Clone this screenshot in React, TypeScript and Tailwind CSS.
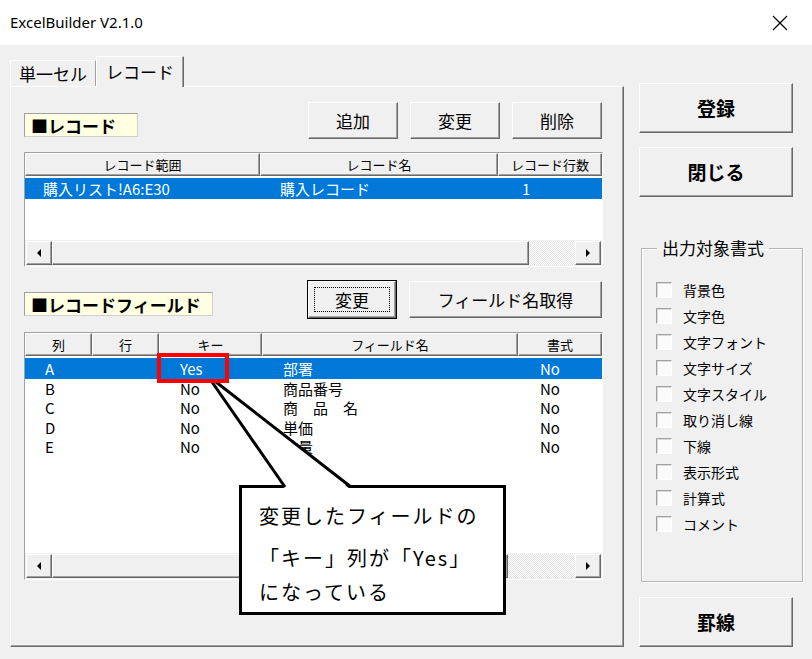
import React from "react";

type Col = { label: string; w: string; pad: string };

const raised =
  "bg-[#f0f0f0] border border-t-white border-l-white border-r-[#696969] border-b-[#696969] shadow-[inset_-1px_-1px_0_#a0a0a0]";

const Arrow = ({ dir }: { dir: "l" | "r" }) => (
  <svg width="8" height="10" viewBox="0 0 8 10">
    {dir === "l" ? (
      <polygon points="6,1 2,5 6,9" fill="#000" />
    ) : (
      <polygon points="2,1 6,5 2,9" fill="#000" />
    )}
  </svg>
);

const HScroll = ({ thumb }: { thumb: string }) => (
  <div className="h-[26px] shrink-0 flex bg-[#f0f0f0] p-[1px]">
    <div className={`w-[26px] h-full flex items-center justify-center ${raised}`}>
      <Arrow dir="l" />
    </div>
    <div className={`${thumb} h-full ${raised}`} />
    <div className="flex-1 h-full bg-[repeating-conic-gradient(#ffffff_0%_25%,#e3e3e3_0%_50%)] bg-[length:2px_2px]" />
    <div className={`w-[26px] h-full flex items-center justify-center ${raised}`}>
      <Arrow dir="r" />
    </div>
  </div>
);

const ListView = ({
  cols,
  rows,
  h,
  thumb,
}: {
  cols: Col[];
  rows: string[][];
  h: string;
  thumb: string;
}) => (
  <div
    className={`${h} w-[579px] flex flex-col bg-white border border-t-[#a0a0a0] border-l-[#a0a0a0] border-r-white border-b-white`}
  >
    <div className="h-[23px] flex shrink-0">
      {cols.map((c, i) => (
        <div
          key={i}
          className={`${c.w} h-full flex items-center justify-center text-[13px] ${raised}`}
        >
          {c.label}
        </div>
      ))}
    </div>
    <div className="flex-1 pt-[2px] overflow-hidden">
      {rows.map((r, ri) => (
        <div
          key={ri}
          className={`flex items-center text-[15px] leading-[17px] overflow-hidden ${
            ri === 0 ? "h-[21px] bg-[#0078d7] text-white" : "h-[19.3px] text-black"
          }`}
        >
          {r.map((cell, ci) => (
            <div key={ci} className={`${cols[ci].w} ${cols[ci].pad} whitespace-pre`}>
              {cell}
            </div>
          ))}
        </div>
      ))}
    </div>
    <HScroll thumb={thumb} />
  </div>
);

const Btn = ({
  className,
  children,
}: {
  className: string;
  children: React.ReactNode;
}) => (
  <div className={`flex items-center justify-center ${raised} ${className}`}>
    {children}
  </div>
);

const Label = ({ w, children }: { w: string; children: React.ReactNode }) => (
  <div
    className={`${w} h-[24px] bg-[#ffffe1] border border-t-[#a0a0a0] border-l-[#a0a0a0] border-r-[#d0d0d0] border-b-[#d0d0d0] flex items-center pl-[6px] text-[17px] font-bold leading-none`}
  >
    {children}
  </div>
);

const recCols: Col[] = [
  { label: "レコード範囲", w: "w-[235px]", pad: "pl-[18px]" },
  { label: "レコード名", w: "w-[238px]", pad: "pl-[20px]" },
  { label: "レコード行数", w: "flex-1", pad: "pl-[24px]" },
];

const fieldCols: Col[] = [
  { label: "列", w: "w-[67px]", pad: "pl-[20px]" },
  { label: "行", w: "w-[67px]", pad: "pl-[20px]" },
  { label: "キー", w: "w-[103px]", pad: "pl-[21px]" },
  { label: "フィールド名", w: "w-[256px]", pad: "pl-[21px]" },
  { label: "書式", w: "flex-1", pad: "pl-[22px]" },
];

const fieldRows = [
  ["A", "", "Yes", "部署", "No"],
  ["B", "", "No", "商品番号", "No"],
  ["C", "", "No", "商　品　名", "No"],
  ["D", "", "No", "単価", "No"],
  ["E", "", "No", "数量", "No"],
];

const formats = [
  "背景色",
  "文字色",
  "文字フォント",
  "文字サイズ",
  "文字スタイル",
  "取り消し線",
  "下線",
  "表示形式",
  "計算式",
  "コメント",
];

export default function App() {
  return (
    <div className="relative w-[812px] h-[659px] overflow-hidden bg-[#f0f0f0] text-black font-['Noto_Sans_CJK_JP',sans-serif]">
      {/* title bar */}
      <div className="h-[45px] bg-white flex items-center justify-between pl-[10px] pr-[24px]">
        <span className="font-['Noto_Sans',sans-serif] text-[15px] text-black">
          ExcelBuilder V2.1.0
        </span>
        <svg width="16" height="16" viewBox="0 0 16 16">
          <path d="M1 1 L15 15 M15 1 L1 15" stroke="#000" strokeWidth="1.2" />
        </svg>
      </div>

      <div className="flex h-[614px]">
        {/* tab control */}
        <div className="ml-[10px] w-[614px] flex flex-col pt-[11px]">
          <div className="h-[30px] flex items-end">
            <div className="w-[86px] h-[26px] flex items-center justify-center text-[17px] border border-b-0 border-t-white border-l-white border-r-[#a0a0a0]">
              単一セル
            </div>
            <div className="relative z-10 w-[88px] h-[31px] mb-[-1px] flex items-center justify-center text-[17px] bg-[#f0f0f0] border border-b-0 border-t-white border-l-white border-r-[#696969] shadow-[inset_-1px_0_0_#a0a0a0]">
              レコード
            </div>
          </div>
          <div
            className={`h-[561px] flex flex-col pl-[13px] pr-[20px] pt-[15px] ${raised}`}
          >
            <div className="h-[37px] flex items-end">
              <div className="mb-[2px]">
                <Label w="w-[114px]">■レコード</Label>
              </div>
              <div className="ml-auto mr-[1px] flex gap-[12px] h-full">
                <Btn className="w-[90px] h-[37px] text-[17px]">追加</Btn>
                <Btn className="w-[90px] h-[37px] text-[17px]">変更</Btn>
                <Btn className="w-[90px] h-[37px] text-[17px]">削除</Btn>
              </div>
            </div>

            <div className="mt-[13px]">
              <ListView
                cols={recCols}
                rows={[["購入リスト!A6:E30", "購入レコード", "1"]]}
                h="h-[115px]"
                thumb="w-[477px]"
              />
            </div>

            <div className="mt-[13px] h-[39px] flex items-end">
              <div className="mb-[3px]">
                <Label w="w-[189px]">■レコードフィールド</Label>
              </div>
              <div className="ml-auto mr-[1px] flex gap-[12px] h-full">
                <div className="relative w-[90px] h-[39px] border border-black">
                  <Btn className="w-full h-full text-[17px]">変更</Btn>
                  <div className="absolute inset-[6px] border border-dotted border-black" />
                </div>
                <Btn className="w-[193px] h-[37px] mt-[1px] text-[17px]">
                  フィールド名取得
                </Btn>
              </div>
            </div>

            <div className="mt-[13px]">
              <ListView
                cols={fieldCols}
                rows={fieldRows}
                h="h-[248px]"
                thumb="w-[456px]"
              />
            </div>
          </div>
        </div>

        {/* right column */}
        <div className="ml-[14px] w-[165px] flex flex-col pt-[38px]">
          <Btn className="ml-[1px] w-[154px] h-[50px] text-[19px] font-bold">
            登録
          </Btn>
          <Btn className="ml-[1px] mt-[14px] w-[154px] h-[50px] text-[19px] font-bold">
            閉じる
          </Btn>
          <fieldset className="ml-[3px] mt-[39px] w-[162px] h-[346px] border border-[#b4b4b4] shadow-[inset_1px_1px_0_#ffffff,1px_1px_0_#ffffff] pl-[14px] pt-[17px]">
            <legend className="ml-[1px] px-[5px] text-[17px] leading-[24px]">
              出力対象書式
            </legend>
            {formats.map((f) => (
              <div key={f} className="h-[26px] flex items-center gap-[11px]">
                <div className="w-[16px] h-[16px] bg-[#fbfbfb] border border-t-[#a0a0a0] border-l-[#a0a0a0] border-r-white border-b-white shadow-[inset_1px_1px_0_#dcdcdc]" />
                <span className="text-[14px] leading-none">{f}</span>
              </div>
            ))}
          </fieldset>
          <Btn className="ml-[1px] mt-[15px] w-[154px] h-[50px] text-[19px] font-bold">
            罫線
          </Btn>
        </div>
      </div>

      {/* annotation */}
      <div className="absolute left-[239px] top-[485px] w-[267px] h-[130px] border-[3px] border-black bg-white pl-[17px] pt-[10px] text-[20px] tracking-[2px] leading-[36px]">
        <div>変更したフィールドの</div>
        <div className="mt-[6px]">「キー」列が「Yes」</div>
        <div className="mt-[-2px]">になっている</div>
      </div>
      <svg
        className="absolute left-0 top-0 pointer-events-none"
        width="812"
        height="659"
        viewBox="0 0 812 659"
      >
        <polygon points="211,382 285,489 350,489 217,382" fill="#fff" />
        <line x1="212" y1="382" x2="285" y2="487" stroke="#000" strokeWidth="3" />
        <line x1="216" y1="382" x2="351" y2="487" stroke="#000" strokeWidth="3" />
      </svg>
      <div className="absolute left-[157px] top-[353px] w-[72px] h-[30px] border-[4px] border-[#ff0000]" />
    </div>
  );
}
